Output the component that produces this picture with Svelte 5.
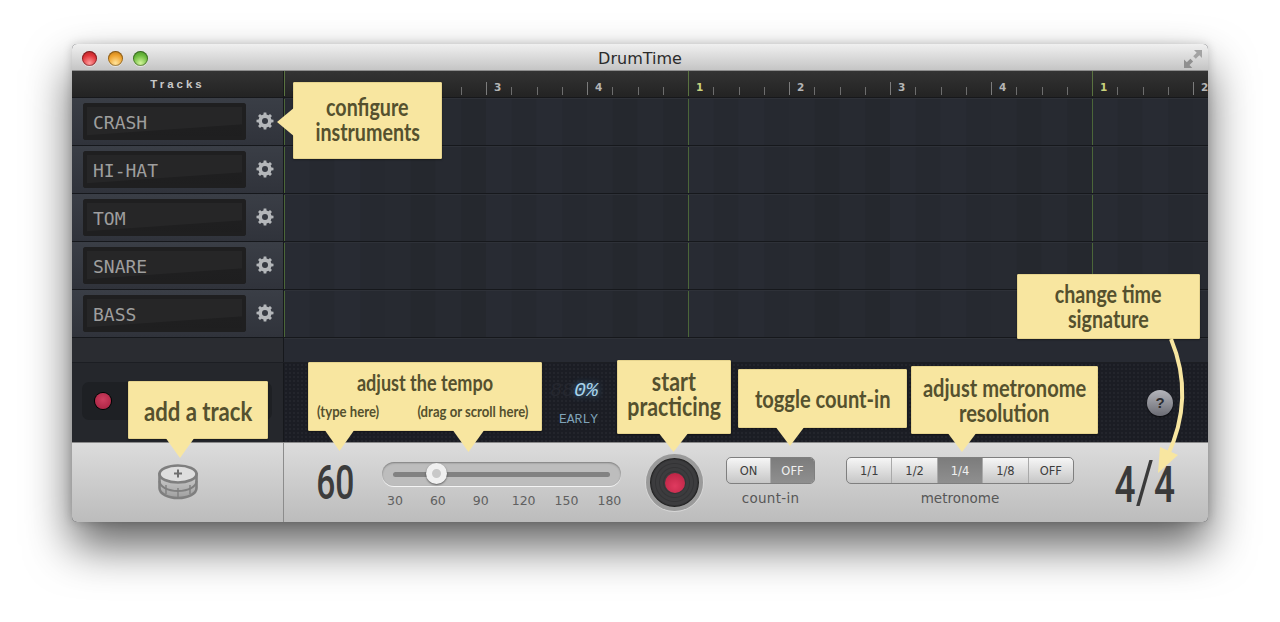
<script>
  const tracks = ['CRASH', 'HI-HAT', 'TOM', 'SNARE', 'BASS'];
  const cells = Array.from({ length: 37 }, (_, i) => i);
  const scale = [30, 60, 90, 120, 150, 180];
  const resolutions = ['1/1', '1/2', '1/4', '1/8', 'OFF'];

  function gearPath(teeth, outer, inner) {
    const pts = [];
    const step = (Math.PI * 2) / teeth;
    for (let i = 0; i < teeth; i++) {
      const a = i * step;
      const w = step * 0.2;
      const n = step * 0.3;
      const p = (r, t) => `${(10 + r * Math.cos(t)).toFixed(2)} ${(10 + r * Math.sin(t)).toFixed(2)}`;
      pts.push(p(inner, a - n), p(outer, a - w), p(outer, a + w), p(inner, a + n));
    }
    return 'M' + pts.join('L') + 'Z';
  }
  const gear = gearPath(8, 8.6, 6.6);
</script>

<div class="stage">
  <div class="win">
    <header class="titlebar">
      <div class="lights">
        <span class="light red"></span>
        <span class="light amber"></span>
        <span class="light green"></span>
      </div>
      <span class="title">DrumTime</span>
      <svg class="expand" viewBox="0 0 20 20" width="20" height="20">
        <path d="M11 1h8v8l-2.700-2.700-3.500 3.500-2.600-2.600 3.500-3.500z" fill="#a3a3a3" />
        <path d="M1 19v-8.500l2.800 2.800 3.600-3.600 2.700 2.700-3.600 3.600 2.800 3z" fill="#8f8f8f" />
      </svg>
    </header>

    <div class="row-head">
      <div class="tracks-head">Tracks</div>
      <div class="ruler">
        {#each cells as i}
          <div class="cell" class:beat={i % 4 === 0} class:bar={i % 16 === 0}>
            <span class="tick"></span>
            {#if i % 4 === 0}<span class="num">{(i / 4) % 4 + 1}</span>{/if}
          </div>
        {/each}
      </div>
    </div>

    {#each tracks as t}
      <div class="row">
        <div class="track">
          <div class="lcd"><span>{t}</span></div>
          <svg class="gear" viewBox="0 0 20 20" width="20" height="20">
            <path d={gear} fill="#b4b7ba" />
            <circle cx="10" cy="10" r="3" fill="#363a42" />
          </svg>
        </div>
        <div class="lane"></div>
      </div>
    {/each}

    <div class="row spacer">
      <div class="spacer-left"></div>
      <div class="lane"></div>
    </div>

    <div class="status">
      <div class="status-left">
        <div class="rec-pill"><span class="rec-dot"></span></div>
      </div>
      <div class="status-right">
        <div class="readout">
          <div class="digits"><span class="ghost">88</span>0%</div>
          <div class="early">EARLY</div>
        </div>
        <div class="help">?</div>
      </div>
    </div>

    <div class="toolbar">
      <div class="tool-left">
        <svg viewBox="0 0 40 36" width="40" height="36">
          <defs>
            <linearGradient id="drumBody" x1="0" y1="0" x2="0" y2="1">
              <stop offset="0" stop-color="#cfcfcf" />
              <stop offset="1" stop-color="#9f9f9f" />
            </linearGradient>
          </defs>
          <path d="M1.500 10v14c0 5.500 8 10 18.500 10s18.500-4.500 18.500-10V10z" fill="url(#drumBody)" stroke="#7f7f7f" stroke-width="2.600" />
          <path d="M1.500 17c0 5.500 8 10 18.500 10s18.500-4.500 18.500-10" fill="none" stroke="#7f7f7f" stroke-width="2" />
          <ellipse cx="20" cy="10" rx="18.500" ry="8.500" fill="#dedede" stroke="#7f7f7f" stroke-width="2.600" />
          <path d="M20 5.500v8M16 9.500h8" stroke="#6f6f6f" stroke-width="2" fill="none" />
          <path d="M20 24v11M8 21v9M32 21v9" stroke="#7f7f7f" stroke-width="1.400" fill="none" />
        </svg>
      </div>
      <div class="tool-main">
        <div class="tempo"><span>60</span></div>
        <div class="slider-box">
          <div class="slider">
            <div class="groove"></div>
            <div class="thumb"></div>
          </div>
          <div class="scale">
            {#each scale as s}<span>{s}</span>{/each}
          </div>
        </div>
        <div class="record"><span class="record-core"></span></div>
        <div class="group countin">
          <div class="seg">
            <span class="opt">ON</span>
            <span class="opt active">OFF</span>
          </div>
          <div class="cap">count-in</div>
        </div>
        <div class="group metro">
          <div class="seg">
            {#each resolutions as r}
              <span class="opt" class:active={r === '1/4'}>{r}</span>
            {/each}
          </div>
          <div class="cap">metronome</div>
        </div>
        <div class="sig"><span>4<b>/</b>4</span></div>
      </div>
    </div>
  </div>

  <div class="callout c-config">
    <i class="tip-left"></i>
    <span>configure</span><span>instruments</span>
  </div>
  <div class="callout c-add">
    <i class="tip t-add"></i>
    <span>add a track</span>
  </div>
  <div class="callout c-tempo">
    <i class="tip t-tempo1"></i><i class="tip t-tempo2"></i>
    <span>adjust the tempo</span>
    <div class="subs"><span>(type here)</span><span>(drag or scroll here)</span></div>
  </div>
  <div class="callout c-start">
    <i class="tip t-start"></i>
    <span>start</span><span>practicing</span>
  </div>
  <div class="callout c-toggle">
    <i class="tip t-toggle"></i>
    <span>toggle count-in</span>
  </div>
  <div class="callout c-metro">
    <i class="tip t-metro"></i>
    <span>adjust metronome</span><span>resolution</span>
  </div>
  <div class="callout c-time">
    <span>change time</span><span>signature</span>
  </div>
  <svg class="curve" viewBox="0 0 1280 622" width="1280" height="622">
    <path d="M1171 339C1186 375 1187 415 1167 457" fill="none" stroke="#f8e6a0" stroke-width="4" />
    <path d="M1160 447L1178 455L1158 473Z" fill="#f8e6a0" />
  </svg>
</div>

<style>
  :global(body) {
    margin: 0;
    background: #fff;
  }
  .stage {
    position: relative;
    width: 1280px;
    height: 622px;
    padding: 44px 72px 0;
    box-sizing: border-box;
    overflow: hidden;
    background: #fff;
    font-family: "DejaVu Sans", sans-serif;
  }
  .win {
    position: relative;
    width: 1136px;
    height: 478px;
    display: flex;
    flex-direction: column;
    border-radius: 5px;
    overflow: hidden;
    box-shadow: 0 24px 46px rgba(0, 0, 0, 0.62), 0 0 10px rgba(0, 0, 0, 0.18);
    background: #25282f;
  }

  .titlebar {
    position: relative;
    flex: 0 0 27px;
    display: flex;
    align-items: center;
    justify-content: center;
    padding-top: 2px;
    background: linear-gradient(#f0f0f0, #c5c5c5);
    border-bottom: 1px solid #8d8d8d;
    box-sizing: border-box;
  }
  .lights {
    position: absolute;
    left: 10px;
    top: 7px;
    display: flex;
    gap: 10.500px;
  }
  .light {
    width: 15px;
    height: 15px;
    border-radius: 50%;
    box-shadow: inset 0 0 0 1px rgba(0, 0, 0, 0.35), 0 1px 0 rgba(255, 255, 255, 0.5);
  }
  .red { background: radial-gradient(circle at 50% 80%, #ff9a9a, #e0353a 55%, #a81c20); }
  .amber { background: radial-gradient(circle at 50% 80%, #ffe39a, #eea22e 55%, #b06e14); }
  .green { background: radial-gradient(circle at 50% 80%, #d2f59a, #6dbb3e 55%, #3f8a22); }
  .title {
    font-size: 16px;
    color: #2b2b2b;
  }
  .expand {
    position: absolute;
    right: 5px;
    top: 5px;
  }

  .row-head {
    flex: 0 0 27px;
    display: flex;
    background: linear-gradient(#333, #232323);
    border-bottom: 1px solid #17181b;
    box-sizing: border-box;
  }
  .tracks-head {
    flex: 0 0 212px;
    text-align: center;
    color: #c8c8c8;
    font-size: 11.500px;
    font-weight: 700;
    letter-spacing: 3px;
    line-height: 25px;
    padding-top: 1px;
    box-sizing: border-box;
    border-right: 1px solid #17181b;
    font-family: "Liberation Sans", sans-serif;
  }
  .ruler {
    flex: 1;
    display: flex;
    overflow: hidden;
  }
  .cell {
    position: relative;
    flex: 0 0 25.250px;
    height: 25px;
  }
  .tick {
    position: absolute;
    left: 0;
    bottom: 1px;
    width: 1px;
    height: 8px;
    background: #6d6d6d;
  }
  .beat .tick {
    height: 13px;
    background: #7c7c7c;
  }
  .bar .tick {
    height: 25px;
    bottom: 0;
    background: #5a7340;
  }
  .num {
    position: absolute;
    left: 8px;
    top: 10px;
    font-size: 10.500px;
    font-weight: 700;
    line-height: 12px;
    color: #b5b5b5;
  }
  .bar .num { color: #c9d27e; left: 8px; }

  .row {
    flex: 0 0 48px;
    display: flex;
    box-sizing: border-box;
    border-bottom: 1px solid #16181c;
  }
  .track {
    flex: 0 0 212px;
    display: flex;
    align-items: center;
    gap: 9px;
    padding-left: 11px;
    box-sizing: border-box;
    background: linear-gradient(#3a3e46, #30333b);
    border-right: 1px solid #16181c;
  }
  .lcd {
    width: 163px;
    height: 37px;
    border-radius: 3px;
    display: flex;
    align-items: center;
    padding: 2px 0 0 10px;
    box-sizing: border-box;
    background: linear-gradient(176deg, #262627 0%, #262627 66%, #1f1f20 68%, #1e1e1f 100%);
    box-shadow: inset 0 0 0 4px #1f1f20;
    color: #9e9e9e;
    font-family: "DejaVu Sans Mono", monospace;
    font-size: 18px;
  }
  .gear {
    flex: none;
    margin-bottom: 1px;
  }
  .lane {
    flex: 1;
    background-color: #282b33;
    background-image:
      linear-gradient(90deg, #4b6639 1px, transparent 1px),
      linear-gradient(90deg, rgba(0, 0, 0, 0) 50%, rgba(0, 0, 0, 0.055) 50%),
      linear-gradient(90deg, rgba(0, 0, 0, 0) 50%, rgba(0, 0, 0, 0.03) 50%);
    background-size: 404px 100%, 50.500px 100%, 202px 100%;
    border-top: 1px solid #2e3138;
  }
  .spacer {
    flex: 0 0 25px;
    border-bottom: 1px solid #1c1e23;
  }
  .spacer-left {
    flex: 0 0 212px;
    background: #2a2c31;
    box-sizing: border-box;
    border-right: 1px solid #16181c;
  }
  .spacer .lane {
    background-image: none;
    background-color: #272a32;
  }

  .status {
    flex: 0 0 79px;
    display: flex;
  }
  .status-left {
    flex: 0 0 212px;
    background: #25272c;
    box-sizing: border-box;
    border-right: 1px solid #16181c;
    padding: 19px 11px 0 10px;
  }
  .rec-pill {
    height: 38px;
    border-radius: 7px;
    background: #1e2024;
    display: flex;
    align-items: center;
    padding-left: 13px;
  }
  .rec-dot {
    width: 16px;
    height: 16px;
    border-radius: 50%;
    background: radial-gradient(circle at 50% 40%, #cf3f60, #a31f3e);
    box-shadow: 0 0 0 1px #000;
  }
  .status-right {
    flex: 1;
    display: flex;
    align-items: flex-start;
    justify-content: space-between;
    padding: 15px 35px 0 266px;
    background-color: #1b1d24;
    background-image: radial-gradient(rgba(255, 255, 255, 0.035) 1px, transparent 1px);
    background-size: 4px 4px;
  }
  .readout {
    text-align: right;
    font-family: "Liberation Mono", monospace;
    width: 46px;
    margin-top: 1px;
  }
  .digits {
    color: #a9d4ea;
    font-size: 20px;
    line-height: 24px;
    font-style: italic;
    text-shadow: 0 0 6px rgba(90, 170, 230, 0.7);
    white-space: nowrap;
  }
  .ghost {
    color: #25272f;
    text-shadow: none;
  }
  .early {
    color: #7fa2b8;
    font-size: 13px;
    line-height: 16px;
    margin: 9px -2px 0 0;
  }
  .help {
    margin-top: 12px;
    width: 26px;
    height: 26px;
    border-radius: 50%;
    background: linear-gradient(#b4b5bb, #6b6c74);
    box-shadow: 0 1px 2px rgba(0, 0, 0, 0.7);
    color: #2c2c30;
    font-weight: 700;
    font-size: 15px;
    line-height: 26px;
    text-align: center;
    font-family: "Liberation Sans", sans-serif;
  }

  .toolbar {
    flex: 0 0 80px;
    display: flex;
    background: linear-gradient(#dcdcdc, #bcbcbc);
    border-top: 1px solid #8a8a8a;
    box-sizing: border-box;
  }
  .tool-left {
    flex: 0 0 212px;
    box-sizing: border-box;
    border-right: 1px solid #8c8c8c;
    display: flex;
    justify-content: center;
    padding-top: 21px;
  }
  .tool-main {
    flex: 1;
    position: relative;
    display: flex;
    align-items: flex-start;
  }
  .tempo {
    width: 36px;
    margin: 16px 0 0 33px;
    height: 48px;
    display: flex;
    justify-content: center;
    color: #3c3c3c;
    font-family: "Roboto", sans-serif;
    font-weight: 500;
    font-size: 48px;
    line-height: 48px;
  }
  .tempo span { display: block; transform: scaleX(0.7); }
  .slider-box {
    margin: 19px 0 0 29px;
    width: 239px;
  }
  .slider {
    position: relative;
    height: 24px;
    border-radius: 12px;
    background: #bdbdbd;
    box-shadow: inset 0 1px 2px rgba(0, 0, 0, 0.35), 0 1px 0 rgba(255, 255, 255, 0.8);
    display: flex;
    align-items: center;
    padding: 0 11px;
    box-sizing: border-box;
  }
  .groove {
    flex: 1;
    height: 5px;
    border-radius: 3px;
    background: #828282;
  }
  .thumb {
    position: absolute;
    left: 44px;
    top: 1px;
    width: 21px;
    height: 21px;
    border-radius: 50%;
    box-sizing: border-box;
    border: 6px solid #f0f0f0;
    background: #c8c8c8;
    box-shadow: 0 1px 2px rgba(0, 0, 0, 0.5);
  }
  .scale {
    display: flex;
    margin: 7px 0 0 -8.500px;
    color: #606060;
    font-size: 12.500px;
    line-height: 16px;
  }
  .scale span {
    flex: 0 0 42.900px;
    text-align: center;
  }
  .record {
    flex: none;
    margin: 11px 0 0 25px;
    width: 57px;
    height: 57px;
    border-radius: 50%;
    display: flex;
    align-items: center;
    justify-content: center;
    box-sizing: border-box;
    border: 4px solid #9a9a9a;
    background: repeating-radial-gradient(circle, #3c3c3e 0, #3c3c3e 2px, #333335 3px, #3c3c3e 4px);
    box-shadow: 0 0 0 1px #d6d6d6, inset 0 0 0 1px #222;
  }
  .record-core {
    width: 20px;
    height: 20px;
    border-radius: 50%;
    background: radial-gradient(circle at 50% 65%, #e03a5f, #b5203f);
  }
  .group {
    flex: none;
    display: flex;
    flex-direction: column;
    align-items: stretch;
    margin-top: 14px;
  }
  .countin { margin-left: 23px; width: 89px; }
  .metro { margin-left: 31px; width: 228px; }
  .seg {
    display: flex;
    height: 27px;
    border-radius: 5px;
    overflow: hidden;
    border: 1px solid #7f7f7f;
    box-sizing: border-box;
    background: linear-gradient(#f6f6f6, #c6c6c6);
  }
  .opt {
    flex: 1;
    display: flex;
    align-items: center;
    justify-content: center;
    font-size: 11.500px;
    color: #3d3d3d;
    border-right: 1px solid #a9a9a9;
  }
  .opt:last-child { border-right: 0; }
  .opt.active {
    background: linear-gradient(#7c7c7c, #8f8f8f);
    color: #f0f0f0;
  }
  .cap {
    text-align: center;
    font-size: 13.500px;
    line-height: 18px;
    margin-top: 5px;
    color: #575757;
  }
  .countin .cap { letter-spacing: 0.300px; }
  .sig {
    margin: 15px 0 0 42px;
    width: 58px;
    height: 56px;
    display: flex;
    justify-content: center;
    color: #3a3a3a;
    font-family: "Roboto", sans-serif;
    font-weight: 500;
    font-size: 50px;
    line-height: 54px;
  }
  .sig span { display: block; transform: scaleX(0.74); white-space: nowrap; }
  .sig b {
    font-weight: 400;
    font-size: 60px;
    line-height: 40px;
  }

  .callout {
    position: absolute;
    box-sizing: border-box;
    display: flex;
    flex-direction: column;
    align-items: center;
    justify-content: center;
    background: #f8e6a0;
    border: 1px solid #e6d48e;
    border-radius: 1px;
    box-shadow: 0 1px 2px rgba(0, 0, 0, 0.35);
    color: #55512e;
    font-family: "Lato", sans-serif;
    font-weight: 700;
    font-size: 24px;
    line-height: 25px;
    white-space: nowrap;
  }
  .callout > span { display: block; transform: scaleX(0.82); }
  .tip, .tip-left {
    position: absolute;
    display: block;
    background: #f8e6a0;
  }
  .tip {
    top: calc(100% - 1px);
    clip-path: polygon(0 0, 100% 0, 50% 100%);
  }
  .tip-left {
    right: calc(100% - 1px);
    top: 24px;
    width: 18px;
    height: 30px;
    clip-path: polygon(100% 0, 100% 100%, 0 50%);
  }
  .c-config { left: 293px; top: 82px; width: 149px; height: 77px; padding-bottom: 4px; }
  .c-add { left: 128px; top: 381px; width: 140px; height: 58px; font-size: 27px; }
  .t-add { left: 36px; width: 30px; height: 21px; }
  .c-tempo {
    left: 308px;
    top: 362px;
    width: 234px;
    height: 69px;
    justify-content: flex-start;
    padding-top: 7px;
    font-size: 22px;
  }
  .t-tempo1 { left: 15px; width: 31px; height: 22px; }
  .t-tempo2 { left: 143px; width: 33px; height: 23px; }
  .subs {
    display: flex;
    justify-content: space-between;
    align-self: stretch;
    padding: 0 15px 0 8px;
    margin-top: 6px;
    font-size: 16px;
    line-height: 20px;
  }
  .subs span { display: block; transform: scaleX(0.82); }
  .subs span:first-child { transform-origin: left; }
  .subs span:last-child { transform-origin: right; }
  .c-start { left: 617px; top: 360px; width: 114px; height: 74px; padding-bottom: 6px; font-size: 26px; }
  .t-start { left: 40px; width: 31px; height: 20px; }
  .c-toggle { left: 738px; top: 369px; width: 169px; height: 59px; font-size: 24.500px; }
  .t-toggle { left: 36px; width: 30px; height: 20px; }
  .c-metro { left: 911px; top: 366px; width: 187px; height: 68px; font-size: 24.500px; }
  .t-metro { left: 35px; width: 30px; height: 20px; }
  .c-time { left: 1017px; top: 274px; width: 183px; height: 65px; padding-bottom: 2px; font-size: 24px; }
  .curve {
    position: absolute;
    left: 0;
    top: 0;
    pointer-events: none;
  }
</style>
